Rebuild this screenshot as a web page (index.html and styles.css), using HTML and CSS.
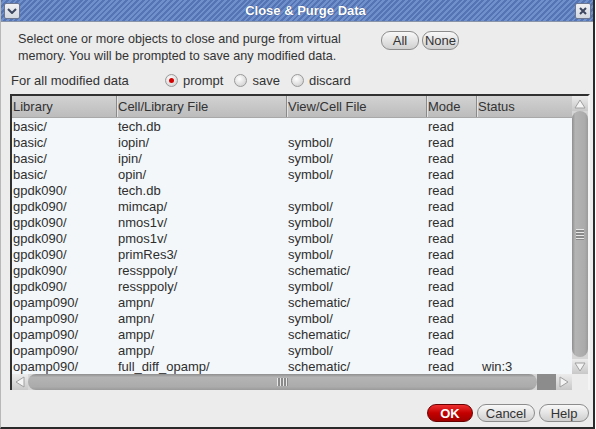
FILE: index.html
```html
<!DOCTYPE html>
<html>
<head>
<meta charset="utf-8">
<link rel="stylesheet" href="styles.css">
</head>
<body>
<div class="window">
  <div class="titlebar">
    <div class="tbtn"><svg width="10" height="6" viewBox="0 0 10 6"><polyline points="1,1 5,5 9,1" fill="none" stroke="#3c4660" stroke-width="2"/></svg></div>
    <div class="title">Close &amp; Purge Data</div>
    <div class="tbtn"><svg width="8" height="8" viewBox="0 0 8 8"><path d="M1 1L7 7M7 1L1 7" stroke="#3c4660" stroke-width="2"/></svg></div>
  </div>
  <div class="top">
    <div class="desc">Select one or more objects to close and purge from virtual memory. You will be prompted to save any modified data.</div>
    <div class="topbtns">
      <div class="btn btn-all">All</div>
      <div class="btn btn-none">None</div>
    </div>
  </div>
  <div class="radiorow">
    <div class="rlabel">For all modified data</div>
    <div class="radio"><span class="dot on"></span>prompt</div>
    <div class="radio"><span class="dot"></span>save</div>
    <div class="radio"><span class="dot"></span>discard</div>
  </div>
  <div class="tablebox">
    <div class="list">
      <div class="hdr">
        <div class="hc">Library</div>
        <div class="hc">Cell/Library File</div>
        <div class="hc">View/Cell File</div>
        <div class="hc">Mode</div>
        <div class="hc">Status</div>
      </div>
      <div class="row"><span>basic/</span><span>tech.db</span><span></span><span>read</span><span></span></div>
      <div class="row"><span>basic/</span><span>iopin/</span><span>symbol/</span><span>read</span><span></span></div>
      <div class="row"><span>basic/</span><span>ipin/</span><span>symbol/</span><span>read</span><span></span></div>
      <div class="row"><span>basic/</span><span>opin/</span><span>symbol/</span><span>read</span><span></span></div>
      <div class="row"><span>gpdk090/</span><span>tech.db</span><span></span><span>read</span><span></span></div>
      <div class="row"><span>gpdk090/</span><span>mimcap/</span><span>symbol/</span><span>read</span><span></span></div>
      <div class="row"><span>gpdk090/</span><span>nmos1v/</span><span>symbol/</span><span>read</span><span></span></div>
      <div class="row"><span>gpdk090/</span><span>pmos1v/</span><span>symbol/</span><span>read</span><span></span></div>
      <div class="row"><span>gpdk090/</span><span>primRes3/</span><span>symbol/</span><span>read</span><span></span></div>
      <div class="row"><span>gpdk090/</span><span>ressppoly/</span><span>schematic/</span><span>read</span><span></span></div>
      <div class="row"><span>gpdk090/</span><span>ressppoly/</span><span>symbol/</span><span>read</span><span></span></div>
      <div class="row"><span>opamp090/</span><span>ampn/</span><span>schematic/</span><span>read</span><span></span></div>
      <div class="row"><span>opamp090/</span><span>ampn/</span><span>symbol/</span><span>read</span><span></span></div>
      <div class="row"><span>opamp090/</span><span>ampp/</span><span>schematic/</span><span>read</span><span></span></div>
      <div class="row"><span>opamp090/</span><span>ampp/</span><span>symbol/</span><span>read</span><span></span></div>
      <div class="row"><span>opamp090/</span><span>full_diff_opamp/</span><span>schematic/</span><span>read</span><span class="st">win:3</span></div>
    </div>
    <div class="vscroll">
      <div class="arrow"><svg width="12" height="10" viewBox="0 0 12 10"><polygon points="6,1 11,9 1,9" fill="#f4f4f4" stroke="#a0a0a0"/></svg></div>
      <div class="vthumb"><div class="vgrip"></div></div>
      <div class="arrow"><svg width="12" height="10" viewBox="0 0 12 10"><polygon points="1,1 11,1 6,9" fill="#f4f4f4" stroke="#a0a0a0"/></svg></div>
    </div>
    <div class="hscroll">
      <div class="arrow"><svg width="10" height="12" viewBox="0 0 10 12"><polygon points="1,6 9,1 9,11" fill="#f4f4f4" stroke="#a0a0a0"/></svg></div>
      <div class="hthumb"><div class="hgrip"></div></div>
      <div class="htrough"></div>
      <div class="arrow"><svg width="10" height="12" viewBox="0 0 10 12"><polygon points="1,1 9,6 1,11" fill="#f4f4f4" stroke="#a0a0a0"/></svg></div>
    </div>
    <div class="corner"></div>
  </div>
  <div class="bottom">
    <div class="btn btn-ok">OK</div>
    <div class="btn btn-cancel">Cancel</div>
    <div class="btn btn-help">Help</div>
  </div>
</div>
</body>
</html>
```
FILE: styles.css
```css
html, body {
  margin: 0;
  padding: 0;
  background: #ffffff;
}
.window {
  width: 592px;
  height: 427px;
  background: #ececec;
  border-right: 2px solid #2a2a2a;
  border-bottom: 2px solid #2a2a2a;
  border-left: 1px solid #b8b8b8;
  box-sizing: content-box;
  display: flex;
  flex-direction: column;
  font-family: "Liberation Sans", Arial, sans-serif;
  color: #333333;
  overflow: hidden;
}
.titlebar {
  height: 22px;
  flex: none;
  display: flex;
  align-items: center;
  padding: 0 2px 0 3px;
  box-sizing: border-box;
  background: repeating-linear-gradient(135deg, #5474b4 0px, #5474b4 2px, #7090cc 2px, #7090cc 4px);
  border-bottom: 1px solid #8a94a8;
}
.tbtn {
  width: 16px;
  height: 16px;
  box-sizing: border-box;
  border: 1px solid #6c7690;
  border-radius: 2px;
  background: linear-gradient(#eef0f4, #d4d8e0);
  display: flex;
  align-items: center;
  justify-content: center;
}
.title {
  flex: 1;
  text-align: center;
  color: #ffffff;
  font-weight: bold;
  font-size: 13px;
  padding-left: 16px;
  text-shadow: 0 0 1px #2a3f70;
}
.top {
  display: flex;
  padding: 9px 0 0 17px;
}
.desc {
  width: 363px;
  font-size: 12.6px;
  line-height: 17px;
}
.topbtns {
  display: flex;
  gap: 3px;
  margin-top: 0;
}
.btn {
  height: 19px;
  box-sizing: border-box;
  border: 1px solid #8c8c8c;
  border-radius: 9px;
  background: linear-gradient(#f8f8f8, #e4e4e4 50%, #cfcfcf);
  font-size: 13px;
  display: flex;
  align-items: center;
  justify-content: center;
  color: #333;
}
.btn-all { width: 38px; }
.btn-none { width: 37px; }
.radiorow {
  display: flex;
  align-items: center;
  height: 20px;
  margin-top: 5px;
  padding-left: 10px;
  font-size: 13px;
}
.rlabel {
  width: 154px;
}
.radio {
  display: flex;
  align-items: center;
  margin-right: 11px;
}
.dot {
  width: 13px;
  height: 13px;
  box-sizing: border-box;
  border-radius: 50%;
  border: 1px solid #9a9a9a;
  background: radial-gradient(circle at 40% 35%, #ffffff, #d8d8d8 70%, #c0c0c0);
  margin-right: 5px;
  position: relative;
}
.dot.on::after {
  content: "";
  position: absolute;
  left: 3px;
  top: 3px;
  width: 5px;
  height: 5px;
  border-radius: 50%;
  background: #d40000;
}
.tablebox {
  margin: 4px 0 0 9px;
  width: 580px;
  box-sizing: border-box;
  border-top: 2px solid #303030;
  border-left: 2px solid #303030;
  border-right: 2px solid #f4f4f4;
  display: grid;
  grid-template-columns: 560px 16px;
  grid-template-rows: 278px 16px;
  background: #f3f7f9;
}
.list {
  font-size: 13px;
  color: #2e2e2e;
  overflow: hidden;
}
.hdr {
  display: grid;
  grid-template-columns: 104px 170px 140px 50px 96px;
  height: 22px;
  background: linear-gradient(#d2d2d2, #bcbcbc);
  border-bottom: 1px solid #a8a8a8;
  box-sizing: border-box;
}
.hc {
  display: flex;
  align-items: center;
  padding-left: 1px;
  color: #333;
  border-left: 1px solid #8a8a8a;
  box-shadow: inset 1px 0 #e2e2e2;
}
.hc:first-child {
  border-left: none;
  box-shadow: none;
}
.row {
  display: grid;
  grid-template-columns: 104px 170px 140px 50px 96px;
  height: 16px;
  line-height: 17px;
}
.row span {
  padding-left: 1px;
  white-space: nowrap;
}
.row span:nth-child(n+2) {
  padding-left: 2px;
}
.row .st {
  padding-left: 6px !important;
}
.vscroll {
  display: flex;
  flex-direction: column;
  background: #d6d6d6;
}
.arrow {
  width: 16px;
  height: 15px;
  flex: none;
  background: linear-gradient(#ececec, #c8c8c8);
  display: flex;
  align-items: center;
  justify-content: center;
}
.vscroll .arrow:last-child {
  margin-top: 2px;
}
.vthumb {
  flex: 1;
  border-radius: 8px;
  background: linear-gradient(90deg, #8e8e8e, #b4b4b4 20%, #ababab 80%, #9a9a9a);
  display: flex;
  align-items: center;
  justify-content: center;
}
.vgrip {
  width: 8px;
  height: 11px;
  background: repeating-linear-gradient(#e8e8e8 0px, #e8e8e8 1px, #8a8a8a 1px, #8a8a8a 3px);
}
.hscroll {
  display: flex;
  background: #d6d6d6;
}
.hscroll .arrow {
  width: 16px;
  height: 16px;
}
.hthumb {
  width: 509px;
  border-radius: 8px;
  background: linear-gradient(#8e8e8e, #b4b4b4 20%, #ababab 80%, #9a9a9a);
  display: flex;
  align-items: center;
  justify-content: center;
}
.hgrip {
  width: 11px;
  height: 8px;
  background: repeating-linear-gradient(90deg, #e8e8e8 0px, #e8e8e8 1px, #8a8a8a 1px, #8a8a8a 3px);
}
.htrough {
  flex: 1;
  background: #8c8c8c;
}
.corner {
  background: #ececec;
}
.bottom {
  display: flex;
  justify-content: flex-end;
  gap: 4px;
  margin-top: 14px;
  padding-right: 4px;
}
.btn-ok {
  width: 46px;
  height: 18px;
  border-color: #6a0000;
  background: linear-gradient(#ee3030, #c40000 50%, #a00000);
  color: #ffffff;
  font-weight: bold;
}
.btn-cancel { width: 58px; height: 18px; }
.btn-help { width: 50px; height: 18px; }
```
